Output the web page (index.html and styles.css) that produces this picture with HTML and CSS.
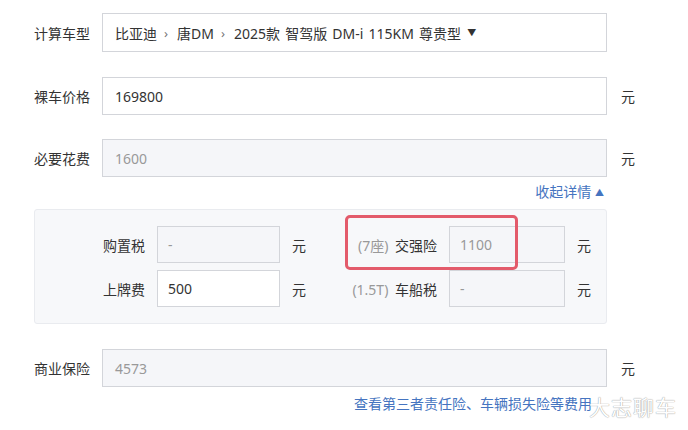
FILE: index.html
```html
<!DOCTYPE html>
<html lang="zh">
<head>
<meta charset="utf-8">
<link rel="stylesheet" href="styles.css">
</head>
<body>
<div class="page">
  <div class="row row-first">
    <div class="label">计算车型</div>
    <div class="field select">比亚迪<span class="sep">›</span>唐DM<span class="sep">›</span>2025款 智驾版 DM-i 115KM 尊贵型 <span class="caret">▼</span></div>
  </div>
  <div class="row">
    <div class="label">裸车价格</div>
    <div class="field">169800</div>
    <div class="unit">元</div>
  </div>
  <div class="row">
    <div class="label">必要花费</div>
    <div class="field disabled">1600</div>
    <div class="unit">元</div>
  </div>
  <div class="toggle-line"><span class="link">收起详情 <span class="tri">▲</span></span></div>
  <div class="panel">
    <div class="plabel">购置税</div>
    <div class="pfield disabled">-</div>
    <div class="punit">元</div>
    <div class="plabel"><span class="muted">(7座)</span> 交强险</div>
    <div class="pfield disabled">1100</div>
    <div class="punit">元</div>
    <div class="plabel">上牌费</div>
    <div class="pfield">500</div>
    <div class="punit">元</div>
    <div class="plabel"><span class="muted">(1.5T)</span> 车船税</div>
    <div class="pfield disabled">-</div>
    <div class="punit">元</div>
    <div class="highlight"></div>
  </div>
  <div class="row row-ins">
    <div class="label">商业保险</div>
    <div class="field disabled">4573</div>
    <div class="unit">元</div>
  </div>
  <div class="link-line"><span class="link">查看第三者责任险、车辆损失险等费用</span></div>
  <div class="watermark">大志聊车</div>
</div>
</body>
</html>
```

FILE: styles.css
```css
* { box-sizing: border-box; }
html, body { margin: 0; padding: 0; background: #fff; }
body {
  font-family: "Noto Sans", "Noto Sans CJK SC", sans-serif;
  font-size: 14px;
  color: #333;
}
.page {
  position: relative;
  width: 688px;
  height: 430px;
  padding: 13px 0 0 34px;
  overflow: hidden;
}
.row {
  display: flex;
  align-items: center;
  height: 38px;
  margin-bottom: 24px;
}
.row-first { height: 39px; margin-bottom: 25px; }
.label {
  width: 56px;
  margin-right: 12px;
  text-align: right;
  white-space: nowrap;
  color: #333;
}
.field {
  width: 505px;
  height: 100%;
  border: 1px solid #d3d5da;
  background: #fff;
  display: flex;
  align-items: center;
  padding-left: 12px;
  color: #333;
  white-space: pre;
}
.field.disabled { background: #f5f6f9; color: #999; }
.select { word-spacing: 1.5px; }
.select .sep { color: #777; margin: 0 9px 0 7px; font-size: 13px; }
.select .caret { font-size: 9px; margin-left: 1px; color: #333; }
.unit { margin-left: 14px; }
.toggle-line {
  width: 570px;
  margin-top: -19px;
  height: 20px;
  line-height: 20px;
  text-align: right;
  margin-bottom: 7px;
}
.link { color: #4574c0; }
.tri { font-size: 9px; vertical-align: 1px; }
.panel {
  position: relative;
  width: 573px;
  height: 115px;
  background: #f7f8fa;
  border: 1px solid #e9ebef;
  border-radius: 3px;
  padding: 16px 0 0 0;
  display: grid;
  grid-template-columns: 110px 123px 14px 119px 116px 14px;
  grid-auto-rows: 37px;
  column-gap: 12px;
  row-gap: 7px;
  align-items: center;
  margin-bottom: 25px;
}
.plabel { text-align: right; white-space: nowrap; }
.muted { color: #999; margin-right: 3px; }
.pfield {
  height: 37px;
  border: 1px solid #d3d5da;
  background: #fff;
  display: flex;
  align-items: center;
  padding-left: 10px;
  color: #333;
}
.pfield.disabled { background: #f5f6f9; color: #999; }
.highlight {
  position: absolute;
  left: 310px;
  top: 5px;
  width: 173px;
  height: 55px;
  border: 3px solid #e35b6b;
  border-radius: 5px;
}
.row-ins { margin-bottom: 8px; }
.link-line {
  width: 558px;
  text-align: right;
  height: 18px;
  line-height: 18px;
}
.watermark {
  position: absolute;
  left: 589px;
  top: 391px;
  font-size: 21px;
  letter-spacing: 1px;
  color: #fff;
  text-shadow: 0 0 1px #999, 0 0 1px #bbb;
}
```
